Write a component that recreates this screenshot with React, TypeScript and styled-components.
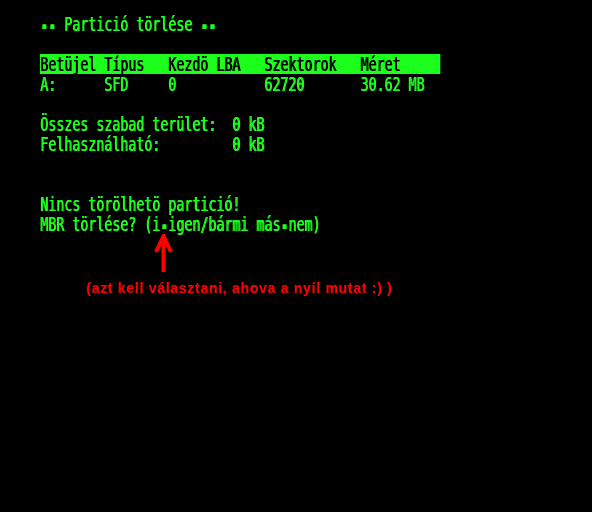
import * as React from 'react'
import styled, { createGlobalStyle } from 'styled-components'

const GREEN = '#1cff1c'
const RED = '#ff0000'

const GlobalStyle = createGlobalStyle`
  html, body {
    margin: 0;
    padding: 0;
    background: #000;
  }
`

const Page = styled.div`
  width: 592px;
  height: 512px;
  background: #000;
  overflow: hidden;
`

// the console font is tall and narrow: 8px cells, so a mono font squeezed sideways
const Terminal = styled.div`
  padding: 14px 0 0 57px;
  width: 700px;
  transform: scaleX(0.7);
  transform-origin: left top;
  font-family: 'DejaVu Sans Mono', monospace;
  font-size: 19px;
  color: ${GREEN};
`

const Line = styled.div<{ $inverse?: boolean }>`
  height: 20px;
  line-height: 20px;
  white-space: pre;
  width: 50ch;
  background: ${(p) => (p.$inverse ? GREEN : 'transparent')};
  color: ${(p) => (p.$inverse ? '#000' : GREEN)};
  text-shadow: 1.2px 0 0 currentColor;
`

const Row = styled(Line)`
  display: grid;
  grid-template-columns: 8ch 8ch 12ch 12ch 10ch;
`

// dashes show up as small square blocks on this console
const Dash = styled.span`
  display: inline-block;
  transform: translateY(-3px) scaleY(3);
`

const Note = styled.div`
  display: flex;
  flex-direction: column;
`

const Arrow = styled.svg`
  display: block;
  margin-left: 154px;
`

const NoteText = styled.div`
  margin: 8px 0 0 86px;
  font-family: 'Liberation Sans', Arial, sans-serif;
  font-weight: 700;
  font-size: 14px;
  line-height: 16px;
  letter-spacing: 0.72px;
  color: ${RED};
`

const columns = ['Betüjel', 'Típus', 'Kezdö LBA', 'Szektorok', 'Méret']
const partition = ['A:', 'SFD', '0', '62720', '30.62 MB']

export default function App() {
  return (
    <Page>
      <GlobalStyle />
      <Terminal>
        <Line>
          <Dash>--</Dash> Partició törlése <Dash>--</Dash>
        </Line>
        <Line />
        <Row $inverse>
          {columns.map((c) => (
            <span key={c}>{c}</span>
          ))}
        </Row>
        <Row>
          {partition.map((c) => (
            <span key={c}>{c}</span>
          ))}
        </Row>
        <Line />
        <Line>Összes szabad terület:  0 kB</Line>
        <Line>Felhasználható:         0 kB</Line>
        <Line />
        <Line />
        <Line>Nincs törölhetö partició!</Line>
        <Line>
          MBR törlése? (i<Dash>-</Dash>igen/bármi más<Dash>-</Dash>nem)
        </Line>
      </Terminal>
      <Note>
        <Arrow width="22" height="38" viewBox="0 0 22 38">
          <polyline
            points="2,18 9.5,2 17,18"
            fill="none"
            stroke={RED}
            strokeWidth="4"
            strokeLinejoin="miter"
          />
          <line x1="9.5" y1="4" x2="9.5" y2="38" stroke={RED} strokeWidth="4" />
        </Arrow>
        <NoteText>(azt kell választani, ahova a nyíl mutat :) )</NoteText>
      </Note>
    </Page>
  )
}
